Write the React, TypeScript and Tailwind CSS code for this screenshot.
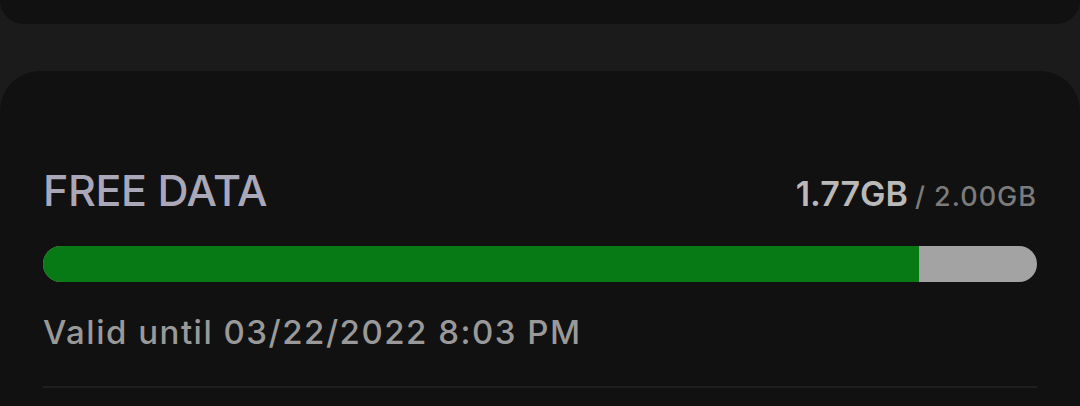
export default function App() {
  const used = 1.77
  const total = 2.0
  const pct = (used / total) * 100

  return (
    <div className="flex h-[406px] w-[1080px] flex-col overflow-hidden bg-[#1b1b1b] font-['Inter','Liberation_Sans',sans-serif]">
      {/* previous card, cut off by the top edge */}
      <div className="h-[24px] shrink-0 rounded-b-[40px] bg-[#111111]" />

      {/* data card */}
      <div className="mt-[47px] flex-1 rounded-t-[40px] bg-[#111111] px-[43px] pt-[93px]">
        <div className="flex items-baseline justify-between">
          <span className="text-[43px] font-medium leading-[52px] tracking-[-0.4px] text-[#a9a7b8]">FREE DATA</span>
          <span className="flex items-baseline gap-[7px]">
            <span className="text-[34px] font-semibold text-[#b9b9b9]">1.77GB</span>
            <span className="text-[27px] font-medium tracking-[1px] text-[#7b7b7b]">/ 2.00GB</span>
          </span>
        </div>

        <div className="mt-[27px] flex h-[36px] overflow-hidden rounded-full bg-[#a3a3a3]">
          <div className="h-full bg-[#087a15]" style={{ width: `${pct - 0.4}%` }} />
        </div>

        <div className="mt-[30px] text-[33px] font-medium leading-[40px] tracking-[1.5px] text-[#999999]">
          Valid until 03/22/2022 8:03 PM
        </div>

        <div className="mt-[34px] h-[2px] bg-[#1e1e1e]" />
      </div>
    </div>
  )
}
